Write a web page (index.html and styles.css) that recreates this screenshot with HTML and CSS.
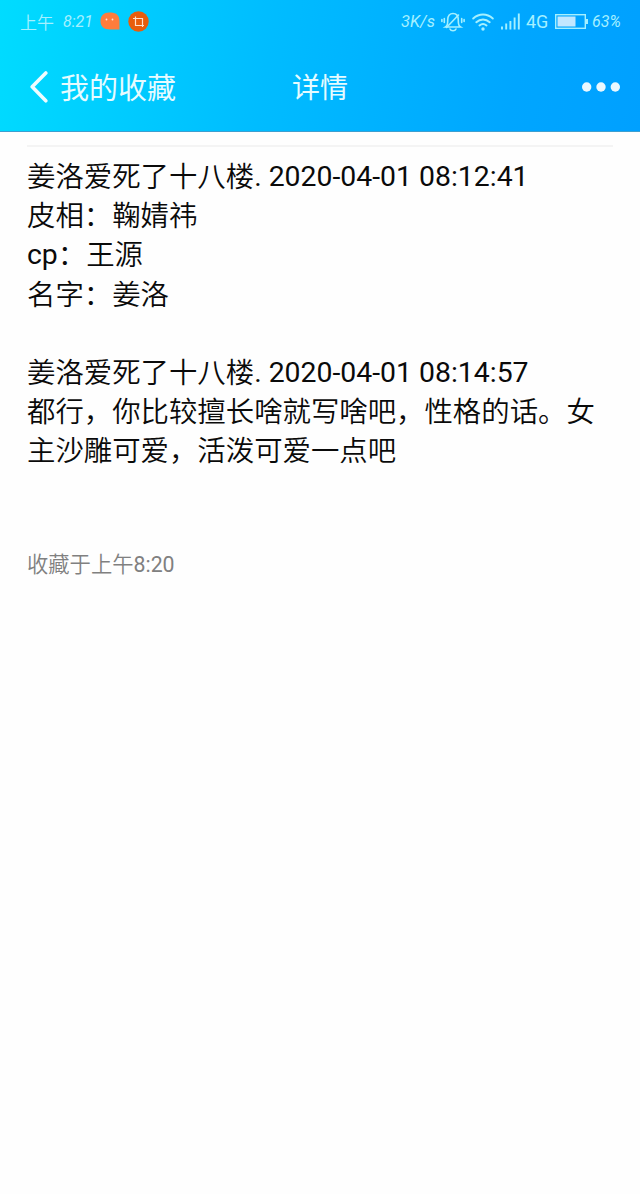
FILE: index.html
```html
<!DOCTYPE html>
<html lang="zh-CN">
<head>
    <meta charset="UTF-8">
    <meta name="viewport" content="width=device-width, initial-scale=1.0">
    <title>详情</title>
    <link rel="stylesheet" href="styles.css">
</head>
<body>
    <header class="header">
        <div class="status-bar">
            <div class="status-left">
                <span class="status-ampm">上午</span>
                <span class="status-time">8:21</span>
                <svg class="icon-chat" width="20" height="19" viewBox="0 0 20 19">
                    <path d="M9 0.500h2C16.500 0.500 19.500 4 19.500 9v8.500h-8.500C4 17.800 0.500 14.500 0.500 9S4 0.500 9 0.500z" fill="#ff7c3c"/>
                    <circle cx="6.500" cy="7.500" r="0.900" fill="#ffe6d8"/>
                    <circle cx="12.500" cy="7.500" r="0.900" fill="#ffe6d8"/>
                </svg>
                <svg class="icon-crop" width="21" height="21" viewBox="0 0 21 21">
                    <circle cx="10.500" cy="10.500" r="10.200" fill="#e85d0c"/>
                    <path d="M7.500 5.500v9h8.500M5 7.500h9.500v8.500" fill="none" stroke="#ffe0ca" stroke-width="1.200"/>
                </svg>
            </div>
            <div class="status-right">
                <span class="status-speed">3K/s</span>
                <svg class="icon-bell" width="24" height="21" viewBox="0 0 24 21" fill="none" stroke="#a5f0ff" stroke-width="1.600" stroke-linecap="round">
                    <path d="M4.500 16c2.500-1.500 2.200-3.500 2.200-7 0-4.500 2.300-6.500 5.300-6.500s5.300 2 5.300 6.500c0 3.500-.3 5.500 2.200 7zM9 18c1 2.300 5 2.300 6 0"/>
                    <path d="M17.500 4L5.500 16.500M3.300 7.500v4M0.900 8.500v2M20.700 7.500v4M23.100 8.500v2"/>
                </svg>
                <svg class="icon-wifi" width="22" height="18" viewBox="0 0 22 18" fill="none" stroke="#a5f0ff" stroke-width="1.900" stroke-linecap="round">
                    <path d="M1.200 5.500c6-5.300 13.600-5.300 19.600 0M4.300 9.200c4-3.700 9.400-3.700 13.400 0M7.500 12.500c2.200-1.900 4.800-1.900 7 0"/>
                    <circle cx="11" cy="16" r="1.700" fill="#a5f0ff" stroke="none"/>
                </svg>
                <svg class="icon-signal" width="19" height="17" viewBox="0 0 19 17" fill="none" stroke="#a5f0ff" stroke-width="1.900">
                    <path d="M1 16.500v-3M5.200 16.500v-6M9.400 16.500V8M13.600 16.500V4.500M17.800 16.500V0.500"/>
                </svg>
                <span class="status-network">4G</span>
                <svg class="icon-battery" width="33" height="15" viewBox="0 0 33 15">
                    <rect x="0.700" y="0.700" width="29.600" height="13.600" fill="none" stroke="#a5f0ff" stroke-width="1.400"/>
                    <rect x="2.500" y="2.500" width="18" height="10" fill="#c2e7ff"/>
                    <rect x="31" y="5" width="2" height="5" fill="#a5f0ff"/>
                </svg>
                <span class="status-percent">63%</span>
            </div>
        </div>
        <nav class="nav-bar">
            <a class="nav-back">
                <svg class="icon-back" width="18" height="32" viewBox="0 0 18 32" fill="none" stroke="#eefcff" stroke-width="3.600" stroke-linecap="round" stroke-linejoin="round">
                    <path d="M15.800 2L2.200 15.800L15.800 29.800"/>
                </svg>
                <span class="nav-back-text">我的收藏</span>
            </a>
            <h1 class="nav-title">详情</h1>
            <svg class="icon-more" width="38" height="10" viewBox="0 0 38 10" fill="#eaf8ff">
                <circle cx="4.700" cy="5" r="4.700"/>
                <circle cx="19" cy="5" r="4.700"/>
                <circle cx="33.300" cy="5" r="4.700"/>
            </svg>
        </nav>
    </header>

    <main class="content">
        <section class="record">
            <p>姜洛爱死了十八楼<span class="latin">. 2020-04-01 08:12:41</span></p>
            <p>皮相：鞠婧祎</p>
            <p><span class="latin">cp</span>：王源</p>
            <p>名字：姜洛</p>
        </section>
        <section class="record">
            <p>姜洛爱死了十八楼<span class="latin">. 2020-04-01 08:14:57</span></p>
            <p>都行，你比较擅长啥就写啥吧，性格的话。女主沙雕可爱，活泼可爱一点吧</p>
        </section>
        <div class="saved-at">收藏于上午<span class="latin">8:20</span></div>
    </main>
</body>
</html>
```
FILE: styles.css
```css
* {
    box-sizing: border-box;
}
body {
    margin: 0;
    min-height: 1194px;
    background: #fefefe;
    color: #0a0a0a;
    font-family: Roboto, "Noto Sans CJK SC", sans-serif;
}
svg {
    display: block;
    flex: none;
}
.header {
    height: 132px;
    background: linear-gradient(100deg, #00dcff 0%, #00bcff 42%, #00a6ff 80%, #00a0ff 100%);
    border-bottom: 1px solid #3d9fd0;
    color: #e6fbff;
}
.status-bar {
    display: flex;
    justify-content: space-between;
    height: 43px;
    padding: 0 18px 0 20px;
    color: #a5f0ff;
}
.status-left,
.status-right {
    display: flex;
    align-items: center;
    white-space: nowrap;
}
.status-ampm {
    width: 43px;
    font-size: 17px;
    font-weight: 350;
}
.status-time {
    width: 37px;
    font-size: 16px;
    font-style: italic;
}
.icon-crop {
    margin-left: 8px;
}
.status-speed {
    width: 40px;
    font-size: 16.5px;
    font-style: italic;
}
.icon-wifi {
    margin-left: 7px;
}
.icon-signal {
    margin-left: 7px;
}
.status-network {
    width: 23px;
    margin-left: 6px;
    font-size: 18px;
}
.icon-battery {
    margin-left: 6px;
}
.status-percent {
    width: 30px;
    margin-left: 4px;
    font-size: 16px;
    font-style: italic;
}
.nav-bar {
    display: grid;
    grid-template-columns: 1fr auto 1fr;
    align-items: center;
    height: 88px;
    padding: 0 20px 0 30px;
}
.nav-back {
    display: flex;
    align-items: center;
    gap: 12px;
}
.nav-back-text {
    padding-top: 4px;
    font-size: 29px;
    line-height: 40px;
}
.nav-title {
    margin: 0 10px 0 0;
    padding-top: 3px;
    font-size: 28px;
    font-weight: 400;
    line-height: 40px;
}
.icon-more {
    justify-self: end;
}
.content {
    margin: 13px 27px 0;
    padding-top: 11px;
    border-top: 2px solid #f4f4f4;
    font-weight: 350;
}
.record {
    margin-bottom: 39px;
    font-size: 28.4px;
    line-height: 39.2px;
}
.record p {
    margin: 0;
}
.latin {
    font-weight: 400;
    line-height: 1;
}
.record .latin {
    vertical-align: 1px;
}
.saved-at {
    margin-top: 79px;
    color: #808080;
    font-size: 21.3px;
    line-height: 30px;
}
```
